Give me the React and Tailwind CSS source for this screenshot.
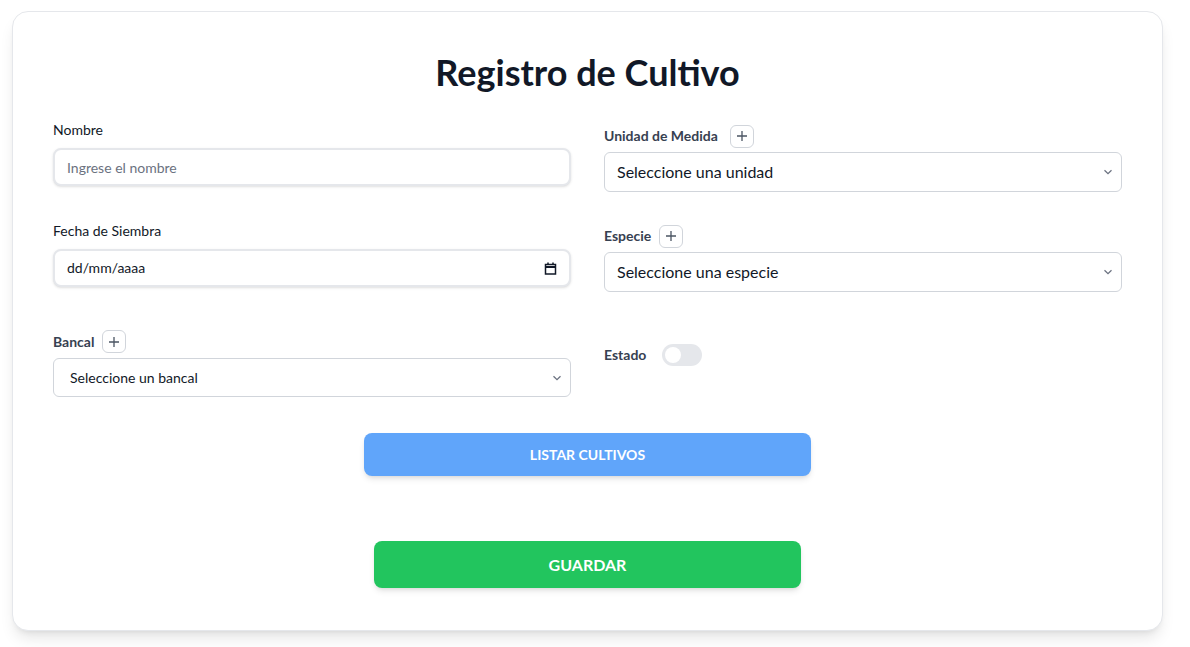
import React from 'react';

const font = { fontFamily: 'Lato, "Noto Sans", sans-serif' };

const PlusButton = () => (
  <button
    type="button"
    className="flex h-[23px] w-6 items-center justify-center rounded-md border border-[#d1d5db] bg-white text-[#4b5563]"
  >
    <svg width="12" height="12" viewBox="0 0 12 12" fill="none" stroke="currentColor" strokeWidth="1.3">
      <path d="M6 1v10M1 6h10" />
    </svg>
  </button>
);

const Chevron = () => (
  <svg width="10" height="6" viewBox="0 0 10 6" fill="none" stroke="#6b7280" strokeWidth="1.3" className="shrink-0">
    <path d="M1.5 1.2 5 4.6l3.5-3.4" />
  </svg>
);

const SelectBox = ({ text, small }) => (
  <div
    className={
      'flex items-center justify-between rounded-md border border-[#d1d5db] bg-white pr-2 text-[#111827] ' +
      (small ? 'h-[39px] pl-4 text-sm' : 'h-10 pl-3 text-base')
    }
  >
    <span>{text}</span>
    <Chevron />
  </div>
);

export default function App() {
  return (
    <div className="min-h-screen bg-white pl-3 pt-[11px]" style={font}>
      <div className="w-[1151px] rounded-2xl border border-[#e5e7eb] bg-white px-10 pt-10 pb-[42px] shadow-lg">
        <h1 className="mb-7 text-center text-4xl font-bold leading-10 text-[#111827]">
          Registro de Cultivo
        </h1>

        <div className="grid grid-cols-2 items-start gap-x-[33px]">
          {/* left column */}
          <div className="flex flex-col">
            <label className="mb-2 text-sm leading-5 text-[#111827]">Nombre</label>
            <input
              type="text"
              placeholder="Ingrese el nombre"
              className="h-[38px] rounded-lg border-2 border-[#e5e7eb] bg-white px-3 text-sm text-[#111827] shadow-sm outline-none placeholder:text-[#6b7280]"
            />

            <label className="mt-[35px] mb-2 text-sm leading-5 text-[#111827]">Fecha de Siembra</label>
            <div className="flex h-[38px] items-center justify-between rounded-lg border-2 border-[#e5e7eb] bg-white pl-3 pr-3 text-sm text-[#111827] shadow-sm">
              <span>dd/mm/aaaa</span>
              <svg width="13" height="13" viewBox="0 0 13 13" fill="none" stroke="#111827" strokeWidth="1.5">
                <rect x="1.5" y="2.5" width="10" height="9.5" />
                <path d="M1.5 5h10" strokeWidth="2" />
                <path d="M4 0.5v2.5M9 0.5v2.5" />
              </svg>
            </div>

            <div className="mt-[43px] mb-[5px] flex items-center gap-2">
              <span className="text-sm font-bold text-[#374151]">Bancal</span>
              <PlusButton />
            </div>
            <SelectBox text="Seleccione un bancal" small />
          </div>

          {/* right column */}
          <div className="flex flex-col pt-1">
            <div className="mb-1 flex h-6 items-center gap-3">
              <span className="text-sm font-bold text-[#374151]">Unidad de Medida</span>
              <PlusButton />
            </div>
            <SelectBox text="Seleccione una unidad" />

            <div className="mt-[33px] mb-[5px] flex h-[22px] items-center gap-2">
              <span className="text-sm font-bold text-[#374151]">Especie</span>
              <PlusButton />
            </div>
            <SelectBox text="Seleccione una especie" />

            <div className="mt-[52px] flex items-center gap-4">
              <span className="text-sm font-bold text-[#374151]">Estado</span>
              <div className="flex h-[22px] w-10 items-center rounded-full bg-[#e5e7eb] px-[3px]">
                <div className="h-4 w-4 rounded-full bg-white" />
              </div>
            </div>
          </div>
        </div>

        <div className="mt-9 flex justify-center">
          <button
            type="button"
            className="h-[43px] w-[447px] rounded-lg bg-[#60a5fa] text-sm font-bold uppercase text-white shadow-md"
          >
            Listar Cultivos
          </button>
        </div>

        <div className="mt-[65px] flex justify-center">
          <button
            type="button"
            className="h-[47px] w-[427px] rounded-lg bg-[#22c55e] text-base font-bold uppercase text-white shadow-md"
          >
            Guardar
          </button>
        </div>
      </div>
    </div>
  );
}
